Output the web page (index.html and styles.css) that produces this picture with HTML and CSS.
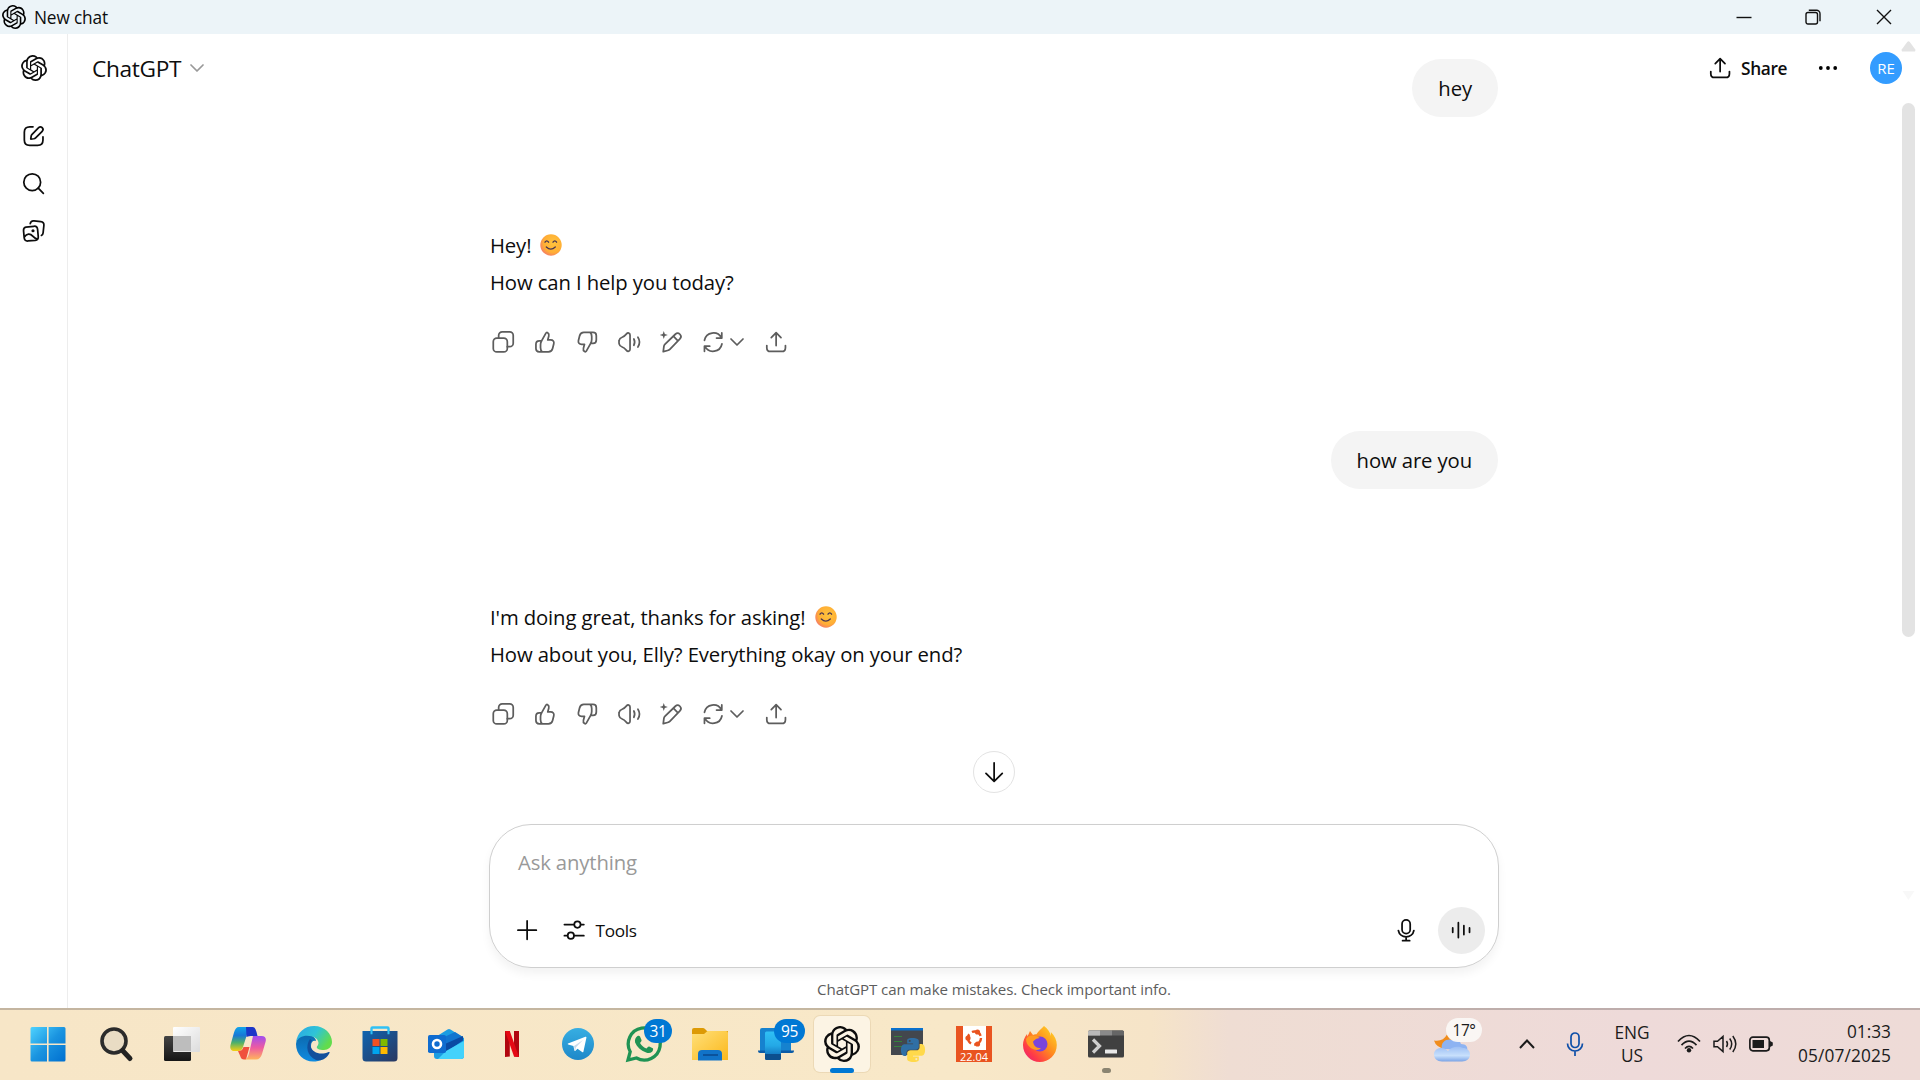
FILE: index.html
```html
<!DOCTYPE html>
<html lang="en">
<head>
<meta charset="utf-8">
<title>New chat</title>
<link rel="stylesheet" href="styles.css">
</head>
<body>
<svg class="defs" aria-hidden="true">
  <defs>
    <linearGradient id="gWin" x1="0" y1="0" x2="1" y2="1"><stop offset="0" stop-color="#4fd3ff"/><stop offset=".5" stop-color="#1a94e0"/><stop offset="1" stop-color="#006fd0"/></linearGradient>
    <linearGradient id="gDark" x1="0" y1="0" x2="0" y2="1"><stop offset="0" stop-color="#444"/><stop offset="1" stop-color="#151515"/></linearGradient>
    <linearGradient id="gLight" x1="0" y1="0" x2="1" y2="1"><stop offset="0" stop-color="#fff"/><stop offset="1" stop-color="#dcdcdc"/></linearGradient>
    <linearGradient id="gCopA" x1="0" y1="0" x2="0" y2="1"><stop offset="0" stop-color="#12a5ea"/><stop offset=".35" stop-color="#1877d6"/><stop offset=".65" stop-color="#4db06b"/><stop offset="1" stop-color="#f7cf12"/></linearGradient>
    <linearGradient id="gCopB" x1="0" y1="0" x2="0" y2="1"><stop offset="0" stop-color="#a04df0"/><stop offset=".5" stop-color="#ee5ba0"/><stop offset="1" stop-color="#ffb45c"/></linearGradient>
    <linearGradient id="gEdgeA" x1="0" y1="0" x2="1" y2=".5"><stop offset="0" stop-color="#2aa5e8"/><stop offset=".55" stop-color="#2fc4d6"/><stop offset="1" stop-color="#62dc4c"/></linearGradient>
    <linearGradient id="gEdgeB" x1="0" y1="0" x2="0" y2="1"><stop offset="0" stop-color="#0c69ae"/><stop offset="1" stop-color="#0f8be0"/></linearGradient>
    <linearGradient id="gStore" x1="0" y1="0" x2="1" y2="1"><stop offset="0" stop-color="#0f64b0"/><stop offset="1" stop-color="#2a3860"/></linearGradient>
    <linearGradient id="gTele" x1="0" y1="0" x2="0" y2="1"><stop offset="0" stop-color="#37aee2"/><stop offset="1" stop-color="#1e88c9"/></linearGradient>
    <linearGradient id="gFold" x1="0" y1="0" x2="1" y2="1"><stop offset="0" stop-color="#ffe07a"/><stop offset="1" stop-color="#fbb81b"/></linearGradient>
    <linearGradient id="gBlue" x1="0" y1="0" x2="0" y2="1"><stop offset="0" stop-color="#2fc0f5"/><stop offset=".5" stop-color="#24a8e6"/><stop offset="1" stop-color="#0a5fae"/></linearGradient>
    <linearGradient id="gFox" x1="1" y1="0" x2="0" y2="1"><stop offset="0" stop-color="#ffe226"/><stop offset=".45" stop-color="#ff8a1e"/><stop offset=".75" stop-color="#ff3b47"/><stop offset="1" stop-color="#e0158a"/></linearGradient>
    <linearGradient id="gCloud" x1="0" y1="0" x2="0" y2="1"><stop offset="0" stop-color="#9dbff4"/><stop offset=".6" stop-color="#c8e0fc"/><stop offset="1" stop-color="#7ba4e6"/></linearGradient>
    <radialGradient id="gEmoji" cx=".6" cy=".4" r=".75"><stop offset="0" stop-color="#ffc43d"/><stop offset=".6" stop-color="#ffae35"/><stop offset="1" stop-color="#f0627e"/></radialGradient>
    <symbol id="logo" viewBox="0 0 24 24"><path fill="currentColor" d="M22.2819 9.8211a5.9847 5.9847 0 0 0-.5157-4.9108 6.0462 6.0462 0 0 0-6.5098-2.9A6.0651 6.0651 0 0 0 4.9807 4.1818a5.9847 5.9847 0 0 0-3.9977 2.9 6.0462 6.0462 0 0 0 .7427 7.0966 5.98 5.98 0 0 0 .511 4.9107 6.051 6.051 0 0 0 6.5146 2.9001A5.9847 5.9847 0 0 0 13.2599 24a6.0557 6.0557 0 0 0 5.7718-4.2058 5.9894 5.9894 0 0 0 3.9977-2.9001 6.0557 6.0557 0 0 0-.7475-7.0729zm-9.022 12.6081a4.4755 4.4755 0 0 1-2.8764-1.0408l.1419-.0804 4.7783-2.7582a.7948.7948 0 0 0 .3927-.6813v-6.7369l2.02 1.1686a.071.071 0 0 1 .038.0615v5.5826a4.504 4.504 0 0 1-4.4945 4.4944zm-9.6607-4.1254a4.4708 4.4708 0 0 1-.5346-3.0137l.142.0852 4.783 2.7582a.7712.7712 0 0 0 .7806 0l5.8428-3.3685v2.3324a.0804.0804 0 0 1-.0332.0615L9.74 19.9502a4.4992 4.4992 0 0 1-6.1408-1.6464zM2.3408 7.8956a4.485 4.485 0 0 1 2.3655-1.9728V11.6a.7664.7664 0 0 0 .3879.6765l5.8144 3.3543-2.0201 1.1685a.0757.0757 0 0 1-.071 0l-4.8303-2.7865A4.504 4.504 0 0 1 2.3408 7.872zm16.5963 3.8558L13.1038 8.364 15.1192 7.2a.0757.0757 0 0 1 .071 0l4.8303 2.7913a4.4944 4.4944 0 0 1-.6765 8.1042v-5.6772a.79.79 0 0 0-.407-.667zm2.0107-3.0231l-.142-.0852-4.7735-2.7818a.7759.7759 0 0 0-.7854 0L9.409 9.2297V6.8974a.0662.0662 0 0 1 .0284-.0615l4.8303-2.7866a4.4992 4.4992 0 0 1 6.6802 4.66zM8.3065 12.863l-2.02-1.1638a.0804.0804 0 0 1-.038-.0567V6.0742a4.4992 4.4992 0 0 1 7.3757-3.4537l-.142.0805L8.704 5.459a.7948.7948 0 0 0-.3927.6813zm1.0976-2.3654l2.602-1.4998 2.6069 1.4998v2.9994l-2.5974 1.4997-2.6067-1.4997Z"/></symbol>
    <symbol id="copy" viewBox="0 0 20 20"><rect x="2.5" y="7" width="10.7" height="10.5" rx="2.7"/><path d="M6.6 7V4.9a2.7 2.7 0 0 1 2.7-2.7H15a2.7 2.7 0 0 1 2.7 2.7v5.9a2.7 2.7 0 0 1-2.7 2.7h-1.8"/></symbol>
    <symbol id="thumb" viewBox="0 0 20 20"><path d="M7.3 9.1 10.500 3.300c.4-.7.9-.8 1.400-.5.9.6 1.200 1.500.9 2.600l-.8 2.900h2.200c1.800 0 2.800 1.200 2.400 2.900l-.9 3.600c-.4 1.600-1.500 2.600-3.200 2.600H5.500C4 17.400 3 16.400 3 14.900v-3.200C3 10.100 4 9.100 5.500 9.100h1.800c-.6.9-.8 1.700-.8 2.900v2.300c0 1.300.3 2.300 1.300 3.100"/></symbol>
    <symbol id="speaker" viewBox="0 0 20 20"><path d="M2.400 8.600c.2-1.200 1-1.900 2.300-2.300 1.300-.4 2.300-1.400 3.300-2.600 1-1.200 2.700-.7 2.700.9v10.800c0 1.600-1.700 2.100-2.700.9-1-1.200-2-2.200-3.300-2.600-1.300-.4-2.100-1.100-2.300-2.300-.2-1-.2-1.800 0-2.800zM13.600 7.600c.8 1.500.8 3.300 0 4.800M16.700 6.300c1.500 2.300 1.500 5.100 0 7.400"/></symbol>
    <symbol id="pencil" viewBox="0 0 20 20"><path d="M4 17.300l.5-4c.1-.7.4-1.200.9-1.700l7.800-7.600a2.500 2.500 0 0 1 3.500 0 2.500 2.500 0 0 1 0 3.500L9 15.500c-.5.5-1 .7-1.700.9zM11.700 5.500l3.500 3.500"/><path fill="currentColor" stroke="none" d="M4.400 1.600l.8 2.200 2.300.8-2.300.8-.8 2.200-.8-2.200-2.300-.8 2.300-.8z"/></symbol>
    <symbol id="cycle" viewBox="0 0 20 20"><path d="M3.400 8.600A6.900 6.900 0 0 1 16.300 6.800M16.600 3v3.900h-4M16.700 11.400A6.900 6.900 0 0 1 3.800 13.200M3.400 17v-3.900h4"/></symbol>
    <symbol id="share" viewBox="0 0 20 20"><path d="M10 12.600V2.900M6.300 6.500 10 2.800l3.700 3.700M2.900 12.600v1.600c0 1.800 1.100 2.900 2.800 2.900h8.600c1.700 0 2.800-1.100 2.800-2.900v-1.600"/></symbol>
    <symbol id="chev" viewBox="0 0 14 8"><path d="M1 1l6 6 6-6"/></symbol>
    <symbol id="smile" viewBox="0 0 22 22"><circle cx="11" cy="11" r="10.700" fill="url(#gEmoji)"/><g fill="none" stroke="#4a3550" stroke-width="1.300" stroke-linecap="round"><path d="M5 8.200q1.700-2.600 3.600 0M13 8.200q1.800-2.600 3.600 0M6.300 13q4.500 4.300 9 0"/></g></symbol>
    <path id="snake" d="M14.25.18l.9.2.73.26.59.3.45.32.34.34.25.34.16.33.1.3.04.26.02.2-.01.13V8.5l-.05.63-.13.55-.21.46-.26.38-.3.31-.33.25-.35.19-.35.14-.33.1-.3.07-.26.04-.21.02H8.77l-.69.05-.59.14-.5.22-.41.27-.33.32-.27.35-.2.36-.15.37-.1.35-.07.32-.04.27-.02.21v3.06H3.17l-.21-.03-.28-.07-.32-.12-.35-.18-.36-.26-.36-.36-.35-.46-.32-.59-.28-.73-.21-.88-.14-1.05-.05-1.23.06-1.22.16-1.04.24-.87.32-.71.36-.57.4-.44.42-.33.42-.24.4-.16.36-.1.32-.05.24-.01h.16l.06.01h8.16v-.83H6.18l-.01-2.75-.02-.37.05-.34.11-.31.17-.28.25-.26.31-.23.38-.2.44-.18.51-.15.58-.12.64-.1.71-.06.77-.04.84-.02 1.27.05zm-6.3 1.980l-.23.33-.08.41.08.41.23.34.33.22.41.09.41-.09.33-.22.23-.34.08-.41-.08-.41-.23-.33-.33-.22-.41-.09-.41.09z"/>
  </defs>
</svg>

<header class="titlebar">
  <svg class="titlebar-logo"><use href="#logo"/></svg>
  <span class="t title-text">New chat</span>
  <div class="window-controls">
    <svg viewBox="0 0 16 16"><path d="M.5 8.500h15"/></svg>
    <svg viewBox="0 0 16 16"><rect x="0" y="3.500" width="11.500" height="11.500" rx="2"/><path d="M2.800 1.200h7.700a3.500 3.500 0 0 1 3.500 3.500v7.600"/></svg>
    <svg viewBox="0 0 16 16"><path d="M1 1l14 14M15 1 1 15"/></svg>
  </div>
</header>

<div class="app">
  <nav class="sidebar">
    <svg class="side-logo"><use href="#logo"/></svg>
    <svg class="icon" viewBox="0 0 20 20"><path d="M9.900 2.900H7.400C4.700 2.900 3.300 4.300 3.300 7v6c0 2.700 1.400 4.100 4.100 4.100h6c2.700 0 4.100-1.400 4.100-4.100v-2.500M8.200 12.200l.3-2.200c.1-.6.300-1 .7-1.400l5-5a1.900 1.900 0 0 1 2.700 2.700l-5 5c-.4.400-.8.6-1.400.7z"/></svg>
    <svg class="icon" viewBox="0 0 20 20"><circle cx="9.300" cy="8.500" r="6.400"/><path d="M13.900 13.100l3.900 3.900"/></svg>
    <svg class="icon" viewBox="0 0 20 20"><path d="M4.500 6.900l6-.6c1.700-.2 2.700.6 2.900 2.300l.5 5.500c.2 1.700-.6 2.700-2.300 2.900l-5.500.5c-1.700.2-2.700-.6-2.900-2.300l-.5-5.500c-.1-1.600.4-2.600 1.800-2.800zM3.200 14.600c2-2.800 4.500-3 6.500-.8 1 1.100 2 2 3.500 2.200M7.800 4.300c.3-1.600 1.200-2.300 2.900-2.100l5.200.6c1.700.2 2.500 1.200 2.300 2.900l-.6 5.600c-.1.900-.5 1.600-1.300 2"/><circle cx="9.900" cy="9.700" r="1.200" fill="currentColor" stroke="none"/></svg>
  </nav>

  <main class="main">
    <div class="topbar">
      <span class="t model">ChatGPT</span>
      <svg class="model-chev"><use href="#chev"/></svg>
      <div class="topbar-right">
        <svg class="icon"><use href="#share"/></svg>
        <span class="t share-label">Share</span>
        <svg class="dots" viewBox="0 0 20 6"><circle cx="2.800" cy="3" r="1.900"/><circle cx="10" cy="3" r="1.900"/><circle cx="17.200" cy="3" r="1.900"/></svg>
        <span class="avatar"><span class="t avatar-text">RE</span></span>
      </div>
    </div>

    <div class="scrollbar">
      <svg class="arrow-up" viewBox="0 0 16 12"><path d="M6.600 1.200q1.400-1.600 2.800 0l5.800 7.800q1 2.500-1 2.500H1.800q-2 0-1-2.500z"/></svg>
      <div class="thumb"></div>
      <svg class="arrow-down" viewBox="0 0 16 12"><path d="M1.500 1h13L8 11z"/></svg>
    </div>

    <section class="thread">
      <div class="bubble"><span class="t">hey</span></div>
      <article class="reply">
        <p><span class="t">Hey!</span><svg class="emoji"><use href="#smile"/></svg></p>
        <p><span class="t">How can I help you today?</span></p>
        <div class="actions">
          <svg class="icon"><use href="#copy"/></svg>
          <svg class="icon"><use href="#thumb"/></svg>
          <svg class="icon flip"><use href="#thumb"/></svg>
          <svg class="icon"><use href="#speaker"/></svg>
          <svg class="icon"><use href="#pencil"/></svg>
          <svg class="icon"><use href="#cycle"/></svg>
          <svg class="act-chev"><use href="#chev"/></svg>
          <svg class="icon"><use href="#share"/></svg>
        </div>
      </article>
      <div class="bubble"><span class="t">how are you</span></div>
      <article class="reply">
        <p><span class="t">I'm doing great, thanks for asking!</span><svg class="emoji"><use href="#smile"/></svg></p>
        <p><span class="t">How about you, Elly? Everything okay on your end?</span></p>
        <div class="actions">
          <svg class="icon"><use href="#copy"/></svg>
          <svg class="icon"><use href="#thumb"/></svg>
          <svg class="icon flip"><use href="#thumb"/></svg>
          <svg class="icon"><use href="#speaker"/></svg>
          <svg class="icon"><use href="#pencil"/></svg>
          <svg class="icon"><use href="#cycle"/></svg>
          <svg class="act-chev"><use href="#chev"/></svg>
          <svg class="icon"><use href="#share"/></svg>
        </div>
      </article>
    </section>

    <div class="dock">
      <div class="to-bottom"><svg class="icon" viewBox="0 0 20 20"><path d="M10 2.900v14M3.800 10.900l6.200 6.200 6.200-6.200"/></svg></div>
      <div class="composer">
        <div class="t placeholder">Ask anything</div>
        <div class="composer-row">
          <svg class="icon" viewBox="0 0 20 20"><path d="M10 3v14M3 10h14"/></svg>
          <svg class="icon sliders" viewBox="0 0 20 20"><path d="M2.600 5.800h7.300M15.100 5.800h2.300M2.600 14.200h2.200M10.100 14.200h7.300"/><circle cx="12.500" cy="5.800" r="2.400"/><circle cx="7.500" cy="14.200" r="2.400"/></svg>
          <span class="t tools">Tools</span>
          <svg class="icon mic" viewBox="0 0 20 20"><rect x="6.900" y="2.200" width="6.200" height="10.400" rx="3.100"/><path d="M4.100 10.300a6 6 0 0 0 11.800 0M10 15.300v2.500M7.300 18h5.400"/></svg>
          <span class="voice"><svg class="icon" viewBox="0 0 20 20"><path d="M3.600 8.300v3.400M7.900 4.300v11.400M12.100 6.600v6.800M16.400 8.300v3.400"/></svg></span>
        </div>
      </div>
      <div class="disclaimer"><span class="t">ChatGPT can make mistakes. Check important info.</span></div>
    </div>
  </main>
</div>

<footer class="taskbar">
  <div class="apps">
    <div class="slot start"><svg viewBox="0 0 36 36"><path fill="url(#gWin)" d="M2 1h15v16.400H.500V2.500Q.500 1 2 1zM18.600 1h15.400Q35.500 1 35.500 2.500V17.400H18.600zM.500 19h16.500v16.500H2Q.500 35.500.500 34zM18.600 19h16.900v15q0 1.500-1.500 1.500H18.600z"/></svg></div>
    <div class="slot"><svg viewBox="0 0 36 36"><circle cx="16" cy="15" r="12" fill="#e9dcc4" stroke="#2b2b2b" stroke-width="3.600"/><path d="M24.500 24.500l7.500 8" stroke="#222" stroke-width="5" stroke-linecap="round"/></svg></div>
    <div class="slot"><svg viewBox="0 0 36 36"><rect y="10" width="27" height="25" rx="1.500" fill="url(#gDark)"/><rect x="9" y="1" width="27" height="25" rx="1" fill="url(#gLight)"/><path fill="#bdbdbd" d="M9 10h18v15H9z"/></svg></div>
    <div class="slot"><svg viewBox="0 0 36 36"><path fill="url(#gCopA)" d="M9 1h13c-3 1-4 4-5.500 9L13 21c-1 3-2.500 4-5 4H4C1 25-.300 22.500.500 19L4 6.500C5 3 6.500 1 9 1z"/><path fill="#1c36c8" d="M16 1h6.500c2 0 3 1.500 4 5l1 4h-5c-3 0-4 0-6 1z"/><path fill="#f0503c" d="M8 25c3 0 4.500-1 5.500-4h6l-3.500 12.500H14c-2 0-3-1-4-4z"/><path fill="url(#gCopB)" d="M23 10h8.500c4 0 5 2.500 4 6L32 28c-1 3.500-3 5.500-6 5.500H14c3-.500 4-2.500 5-6z"/></svg></div>
    <div class="slot"><svg viewBox="0 0 36 36"><path fill="url(#gEdgeB)" d="M0 18C1 9 8 8 13 9c5 1 7 4 7 6-3-1-5 1-5 5 0 7 5 12 12 13C14 40 0 32 0 18z"/><path fill="url(#gEdgeA)" d="M0 17C1 6 9 0 18 0c11 0 18 8 18 16 0 5-4 8-8 8-5 0-8-1.500-7-3.500 3-3 1.500-8-4.500-10C9.500 8.500 2 10 0 17z"/><path fill="#114f9c" d="M14 13c-5 7-3 17 6 21 6 1.500 11-2 13.500-7 .500-1-.300-1.300-1-1C25 29.500 16 27 14.500 20c-.500-2 .500-4.500 1.500-5.500z"/></svg></div>
    <div class="slot"><svg viewBox="0 0 36 36"><path d="M9.500 8V2.500q0-1 1-1h15q1 0 1 1V8" fill="none" stroke="#30c1f5" stroke-width="2.400"/><path fill="url(#gStore)" d="M.500 5h35v27q0 3.500-3.500 3.500H4Q.500 35.500.500 32z"/><path d="M9.500 8.200V5M26.500 8.200V5" stroke="#30c1f5" stroke-width="2"/><path fill="#f25022" d="M10.500 13h7v7h-7z"/><path fill="#7fba00" d="M18.500 13h7v7h-7z"/><path fill="#00a4ef" d="M10.500 21h7v7h-7z"/><path fill="#ffb900" d="M18.500 21h7v7h-7z"/></svg></div>
    <div class="slot"><svg viewBox="0 0 36 36"><path fill="#1b9de2" d="M6 12 19.500 3.500Q21 2.500 22.500 3.500L36 12v18q0 3-3 3H9q-3 0-3-3z"/><path fill="#1175d0" d="M12 13 27 6l8 5-17 11z"/><path fill="#0a4aa3" d="M18 17.500 35 10v4.500L18 26z"/><path fill="#43d2fb" d="M18 25l18-10v15q0 3-3 3H10z"/><rect y="9" width="18" height="18" rx="1.800" fill="#0f6cd0"/><circle cx="9" cy="18" r="4" fill="none" stroke="#fff" stroke-width="2.600"/></svg></div>
    <div class="slot"><svg viewBox="0 0 36 36"><path fill="#b1060f" d="M11 5h4.800v25.500L11 31zM20 5h5v26l-5-.500z"/><path fill="#e50914" d="M11 5h4.800L25 31l-5-.500z"/></svg></div>
    <div class="slot"><svg viewBox="0 0 36 36"><circle cx="18" cy="18" r="16" fill="url(#gTele)"/><path fill="#fff" d="M8 17.600 25.400 10.800q1.200-.3 1 .9l-3 14q-.4 1-1.300.4l-4.600-3.400-2.300 2.200q-.6.400-.8-.500l-1-4.400-5.200-1.500q-1-.4-.2-.9z"/><path fill="#c8daea" d="M14 20l9-6-7 7.300-.9 3.400z"/></svg></div>
    <div class="slot"><svg viewBox="0 0 36 36"><path fill="none" stroke="#1f9354" stroke-width="3.300" d="M2 34l2.200-8.300A16 16 0 1 1 10.500 32z"/><path fill="#1f9354" d="M11.500 10c1-.6 2-.4 2.500.5l1.500 3.400c.3.800-.2 1.600-1.500 3 1.800 3 4 4.700 6.500 5.700 1.300-1.600 1.900-2.500 2.700-2.100l3.600 1.700c.6.400.4 2.400-.7 3.500-1.500 1.300-3.500 1.600-6 .7-5.500-2-9-5.500-11-10-.6-2.500.4-5.200 2.400-6.400z"/></svg><span class="badge"><span class="t badge-text">31</span></span></div>
    <div class="slot"><svg viewBox="0 0 36 36"><path fill="#dd9a05" d="M0 4q0-2 2-2h9q1 0 2 1l2 2h21v5H0z"/><path fill="url(#gFold)" d="M0 8h12l3.500-3H34q2 0 2 2v27H0z"/><path fill="#1173c8" d="M6 34.500V28q0-4 4-4h16q4 0 4 4v6.500z"/><path stroke="#0c4f96" stroke-width="1.800" d="M11 29h15"/></svg></div>
    <div class="slot"><svg viewBox="0 0 36 36"><path fill="#1682cf" d="M2 4q0-2 2-2h27q2 0 2 2v21H2z"/><path fill="#0b5ba6" d="M0 24.500h36V25q0 2-2 2H2q-2 0-2-2z"/><path fill="url(#gBlue)" d="M7 7q0-1.500 1.500-1.500H23V32q0 2-2 2H9q-2 0-2-2z"/><path fill="#0c4f8e" d="M7 28h16v4.500q0 1.500-2 1.500H9q-2 0-2-1.500z"/></svg><span class="badge wide"><span class="t badge-text">95</span></span></div>
    <div class="slot active"><svg viewBox="0 0 36 36"><use href="#logo" width="36" height="36"/></svg><i class="ind on"></i></div>
    <div class="slot"><svg viewBox="0 0 36 36"><path fill="#43474d" d="M1 2h32v27H1z"/><path fill="#0a70cc" d="M1 2h32v2.500H1z"/><path stroke="#35823b" stroke-width="1.200" d="M4 10.500h8M4 15.500h8M4 20.500h8"/><g transform="translate(11 12)"><use href="#snake" fill="#2f6fa5"/><use href="#snake" fill="#ffd94a" transform="rotate(180 12 12)"/></g></svg></div>
    <div class="slot"><svg viewBox="0 0 36 36"><path fill="#e95420" d="M0 0h36v36H0z"/><path fill="#fff" d="M7 0h23v24H7z"/><circle cx="18.500" cy="12" r="6.500" fill="none" stroke="#e95420" stroke-width="2.400" stroke-dasharray="10.300 3.300"/><g fill="#e95420"><circle cx="12" cy="12" r="2.600"/><circle cx="21.500" cy="6" r="2.600"/><circle cx="21.500" cy="18" r="2.600"/></g><text class="ubuntu-text" x="18" y="34.800" text-anchor="middle" textLength="28">22.04</text></svg></div>
    <div class="slot"><svg viewBox="0 0 36 36"><path fill="url(#gFox)" d="M22 0c4 3 6 6 7 10 0-2 0-3-.2-4 4 4 6 8 6 13 0 10-8 17-17 17S1 28.500 1 19c0-4 1.500-8 4-11l.5 2.500L8 5l3 4c1-.8 2-1 3.500-.8C16 5.500 19 3 22 0z"/><circle cx="18" cy="18" r="7.500" fill="#7a44dc"/><path fill="#ff9a22" d="M4 13c3-5 9-4 14-1-4 .3-5 2-7 3.500 1 5 3 6 8 7-5 4-15-1-15-9.500z"/></svg></div>
    <div class="slot"><svg viewBox="0 0 36 36"><rect y="4.500" width="36" height="27" rx="1.500" fill="#404040"/><path fill="#8a8a8a" d="M1.500 4.500H24v5H0V6q0-1.500 1.500-1.500z"/><path fill="#b9b9b9" d="M0 6q0-1.500 1.500-1.500H12v5H0z"/><path fill="#666" d="M24 4.500h10.500Q36 4.500 36 6v3.500H24z"/><path fill="none" stroke="#cfcfcf" stroke-width="3.200" d="M5 13.500l6.500 6.500L5 26.500"/><rect x="17" y="23.500" width="12" height="4" rx=".500" fill="#e8e8e8"/></svg><i class="ind"></i></div>
  </div>

  <div class="tray">
    <div class="weather"><svg viewBox="0 0 36 32"><path fill="#f08c1c" d="M0 9.500q9 1.500 13-6l6 6-8 8q-9-1-11-8z"/><path fill="#8db3f2" d="M8 18C6 10 14 7 19 9c4-1 7 0 8 4 5 0 7 3 6 6z"/><path fill="url(#gCloud)" d="M8 30.500c-5 0-8-3-8-7s3-6.500 7-6.500c3 0 5 1 7 3 4-5 11-5 15-3 4 0 7 2.500 7 6.500s-3 7-8 7z"/></svg><span class="temp"><span class="t temp-text">17°</span></span></div>
    <svg class="tray-chev" viewBox="0 0 16 10"><path d="M1 9l7-7.500L15 9"/></svg>
    <svg class="tray-mic" viewBox="0 0 18 24"><rect x="5" y="1" width="8" height="14.500" rx="4"/><path d="M1.500 11.500a7.500 7.500 0 0 0 15 0M9 19.500V24"/></svg>
    <div class="lang"><span class="t">ENG</span><span class="t">US</span></div>
    <svg class="wifi" viewBox="0 0 24 20"><path d="M1 7.500q11-12 22 0M4.500 11.200q7.500-8 15 0M8 14.500q4-4.300 8 0"/><circle cx="12" cy="16.300" r="2.200"/></svg>
    <svg class="vol" viewBox="0 0 24 20"><path d="M1 7.300h3.500L10 2.500v15l-5.500-4.800H1zM13.500 7q2 3 0 6M16.700 4.500q4 5.500 0 11M19.800 2q6 8 0 16"/></svg>
    <svg class="batt" viewBox="0 0 24 16"><rect x=".900" y="1.200" width="19.400" height="13.600" rx="3"/><rect class="fill" x="3.500" y="4" width="11.500" height="8"/><path class="fill" d="M21 5l2.800 1.500v3L21 11z"/></svg>
    <div class="clock"><span class="t">01:33</span><span class="t date">05/07/2025</span></div>
  </div>
</footer>
</body>
</html>
```
FILE: styles.css
```css
* { box-sizing: border-box; }
body {
  margin: 0;
  width: 1920px;
  height: 1080px;
  overflow: hidden;
  display: flex;
  flex-direction: column;
  font-family: "Open Sans", "Noto Sans", sans-serif;
  color: #0d0d0d;
  background: #fff;
}
svg { display: block; flex: none; overflow: visible; }
.defs { position: absolute; width: 0; height: 0; }
.t { white-space: nowrap; }
.icon, .model-chev, .act-chev {
  width: 26.25px;
  height: 26.25px;
  fill: none;
  stroke: currentColor;
  stroke-width: 1.33;
  stroke-linecap: round;
  stroke-linejoin: round;
}

/* window title bar */
.titlebar {
  height: 34px;
  flex: none;
  display: flex;
  align-items: center;
  padding-left: 2px;
  background: #ecf4f8;
}
.titlebar-logo { width: 24px; height: 24px; color: #000; }
.title-text { font-size: 17.3px; letter-spacing: -.15px; margin-left: 8px; padding-top: 1px; }
.window-controls { margin-left: auto; margin-right: 28px; display: flex; gap: 54px; }
.window-controls svg { width: 16px; height: 16px; fill: none; stroke: #111; stroke-width: 1.4; }

.app { height: 974px; flex: none; display: flex; }
.sidebar {
  width: 68px;
  border-right: 1px solid #ededed;
  padding-top: 21px;
  display: flex;
  flex-direction: column;
  align-items: center;
}
.side-logo { width: 26px; height: 26px; margin-bottom: 42px; }
.sidebar .icon { margin-bottom: 21.4px; }

.main { position: relative; flex: 1; }

/* floating header over the scrolling thread */
.topbar {
  position: absolute;
  inset: 0 0 auto 0;
  height: 68px;
  display: flex;
  align-items: center;
  padding: 0 18px 0 24px;
}
.model { font-size: 22.7px; letter-spacing: -.35px; }
.model-chev { width: 14px; height: 8px; margin-left: 9px; color: #999; stroke-width: 1.7; }
.topbar-right { margin-left: auto; display: flex; align-items: center; }
.share-label { font-size: 17.3px; letter-spacing: -.4px; font-weight: 600; margin-left: 8px; }
.dots { width: 20px; height: 6px; margin-left: 31px; }
.avatar {
  width: 32px;
  height: 32px;
  margin-left: 32px;
  border-radius: 50%;
  background: #339cff;
  color: #fff;
  display: flex;
  align-items: center;
  justify-content: center;
}
.avatar-text { font-size: 15px; }

.scrollbar { position: absolute; top: 0; right: 4px; bottom: 0; width: 15px; }
.scrollbar svg { width: 15px; height: 11px; fill: #e3e3e3; }
.arrow-up { margin-top: 7px; }
.scrollbar .thumb { width: 13px; height: 534px; margin: 51px 0 0 1px; border-radius: 7px; background: #e3e3e3; }
.scrollbar .arrow-down { margin-top: 253px; fill: #f8f8f8; }

/* conversation */
.thread {
  width: 1008px;
  height: 707px;
  margin: 0 auto;
  padding-top: 25px;
  display: flex;
  flex-direction: column;
  font-size: 20.3px;
  letter-spacing: -.11px;
}
.bubble {
  flex: none;
  align-self: flex-end;
  height: 57.5px;
  padding: 0 26px;
  border-radius: 29px;
  background: #f4f4f4;
  display: flex;
  align-items: center;
}
.reply { flex: none; height: 314.5px; padding-top: 110.5px; }
.reply:last-child { height: auto; }
.reply p { margin: 0; height: 36.7px; display: flex; align-items: center; }
.emoji { width: 22px; height: 22px; margin-left: 9px; }
.actions { display: flex; align-items: center; height: 42px; margin-top: 21px; color: #5d5d5d; }
.actions .icon { margin-right: 15.75px; }
.actions .act-chev { width: 14px; height: 8px; margin: 0 19px 0 -12px; stroke-width: 1.7; }
.flip { transform: rotate(180deg); }

.dock { width: 1010px; margin: 10px auto 0; display: flex; flex-direction: column; align-items: center; }
.to-bottom {
  width: 42px;
  height: 42px;
  border: 1px solid #e3e3e3;
  border-radius: 50%;
  display: flex;
  align-items: center;
  justify-content: center;
}
.composer {
  width: 1010px;
  height: 144px;
  margin-top: 31px;
  padding: 21px 13px 12px 27px;
  border: 1px solid #cfcfcf;
  border-radius: 42px;
  box-shadow: 0 6px 10px rgba(0, 0, 0, .05);
}
.placeholder { font-size: 20.3px; letter-spacing: -.14px; line-height: 32px; color: #999; padding-left: 1px; }
.composer-row { display: flex; align-items: center; height: 47px; margin-top: 29px; }
.composer-row > .icon { margin-left: -3px; }
.composer-row > .sliders { margin-left: 21px; }
.tools { font-size: 17.2px; letter-spacing: -.3px; margin-left: 8px; }
.composer-row > .mic { margin-left: auto; }
.voice {
  width: 47px;
  height: 47px;
  margin-left: 19px;
  border-radius: 50%;
  background: #ececec;
  display: flex;
  align-items: center;
  justify-content: center;
}
.disclaimer { margin-top: 10px; font-size: 15.1px; letter-spacing: -.1px; line-height: 22px; color: #5d5d5d; }

/* taskbar */
.taskbar {
  height: 72px;
  flex: none;
  display: flex;
  justify-content: space-between;
  align-items: center;
  padding-bottom: 1px;
  background: linear-gradient(90deg, #f7e6c7 0, #f8e8c8 50%, #f6e4c8 60%, #efddd3 64%, #eedad9 85%, #eedbd7 100%);
  box-shadow: inset 0 2px rgba(80, 70, 70, .3);
}
.apps { display: flex; padding-left: 15px; }
.slot { position: relative; width: 66px; height: 56px; display: flex; align-items: center; justify-content: center; }
.slot.start { margin-right: 2px; }
.slot > svg { width: 36px; height: 36px; }
.slot.active {
  width: 56px;
  margin: 0 5px;
  background: #fcf4e4;
  border-radius: 6px;
  box-shadow: 0 0 0 1px rgba(190, 160, 110, .2);
}
.badge {
  position: absolute;
  left: 33px;
  top: 3px;
  height: 24px;
  width: 28px;
  border-radius: 12px;
  background: #0078d4;
  color: #fff;
  display: flex;
  align-items: center;
  justify-content: center;
}
.badge.wide { left: 31px; width: 31px; }
.badge-text { font-size: 15.5px; letter-spacing: -.3px; }
.ind {
  position: absolute;
  left: calc(50% - 4.5px);
  bottom: -1px;
  width: 9px;
  height: 5px;
  border-radius: 3px;
  background: #8b8471;
}
.ind.on { left: calc(50% - 12px); width: 24px; background: #0078d4; }
.ubuntu-text { font-size: 11px; fill: #fff; }

.tray { display: flex; align-items: center; padding-right: 29px; font-size: 17.3px; color: #1b1b1b; }
.tray svg { fill: none; stroke: #1b1b1b; stroke-width: 1.7; }
.weather { position: relative; width: 36px; height: 56px; padding-top: 15px; }
.tray .weather svg { width: 36px; height: 32px; stroke: none; }
.temp {
  position: absolute;
  left: 12px;
  top: 2px;
  width: 36px;
  height: 24px;
  border-radius: 12px;
  background: rgba(250, 248, 245, .95);
  display: flex;
  align-items: center;
  justify-content: center;
}
.temp-text { font-size: 15.5px; letter-spacing: -.5px; }
.tray .tray-chev { width: 16px; height: 10px; margin-left: 49px; stroke-width: 2; }
.tray .tray-mic { width: 18px; height: 24px; margin-left: 31px; stroke: #0f4fa8; }
.lang { width: 50px; margin-left: 23px; padding-top: 1px; display: flex; flex-direction: column; align-items: center; line-height: 23px; }
.tray .wifi { width: 24px; height: 20px; margin-left: 20px; }
.tray .wifi circle { fill: #1b1b1b; stroke: none; }
.tray .vol { width: 24px; height: 20px; margin-left: 12px; stroke-width: 1.5; }
.tray .batt { width: 24px; height: 16px; margin-left: 12px; }
.tray .batt .fill { fill: #1b1b1b; stroke: none; }
.clock { width: 94px; margin-left: 24px; display: flex; flex-direction: column; align-items: flex-end; line-height: 24px; }
.date { letter-spacing: .12px; }
```
